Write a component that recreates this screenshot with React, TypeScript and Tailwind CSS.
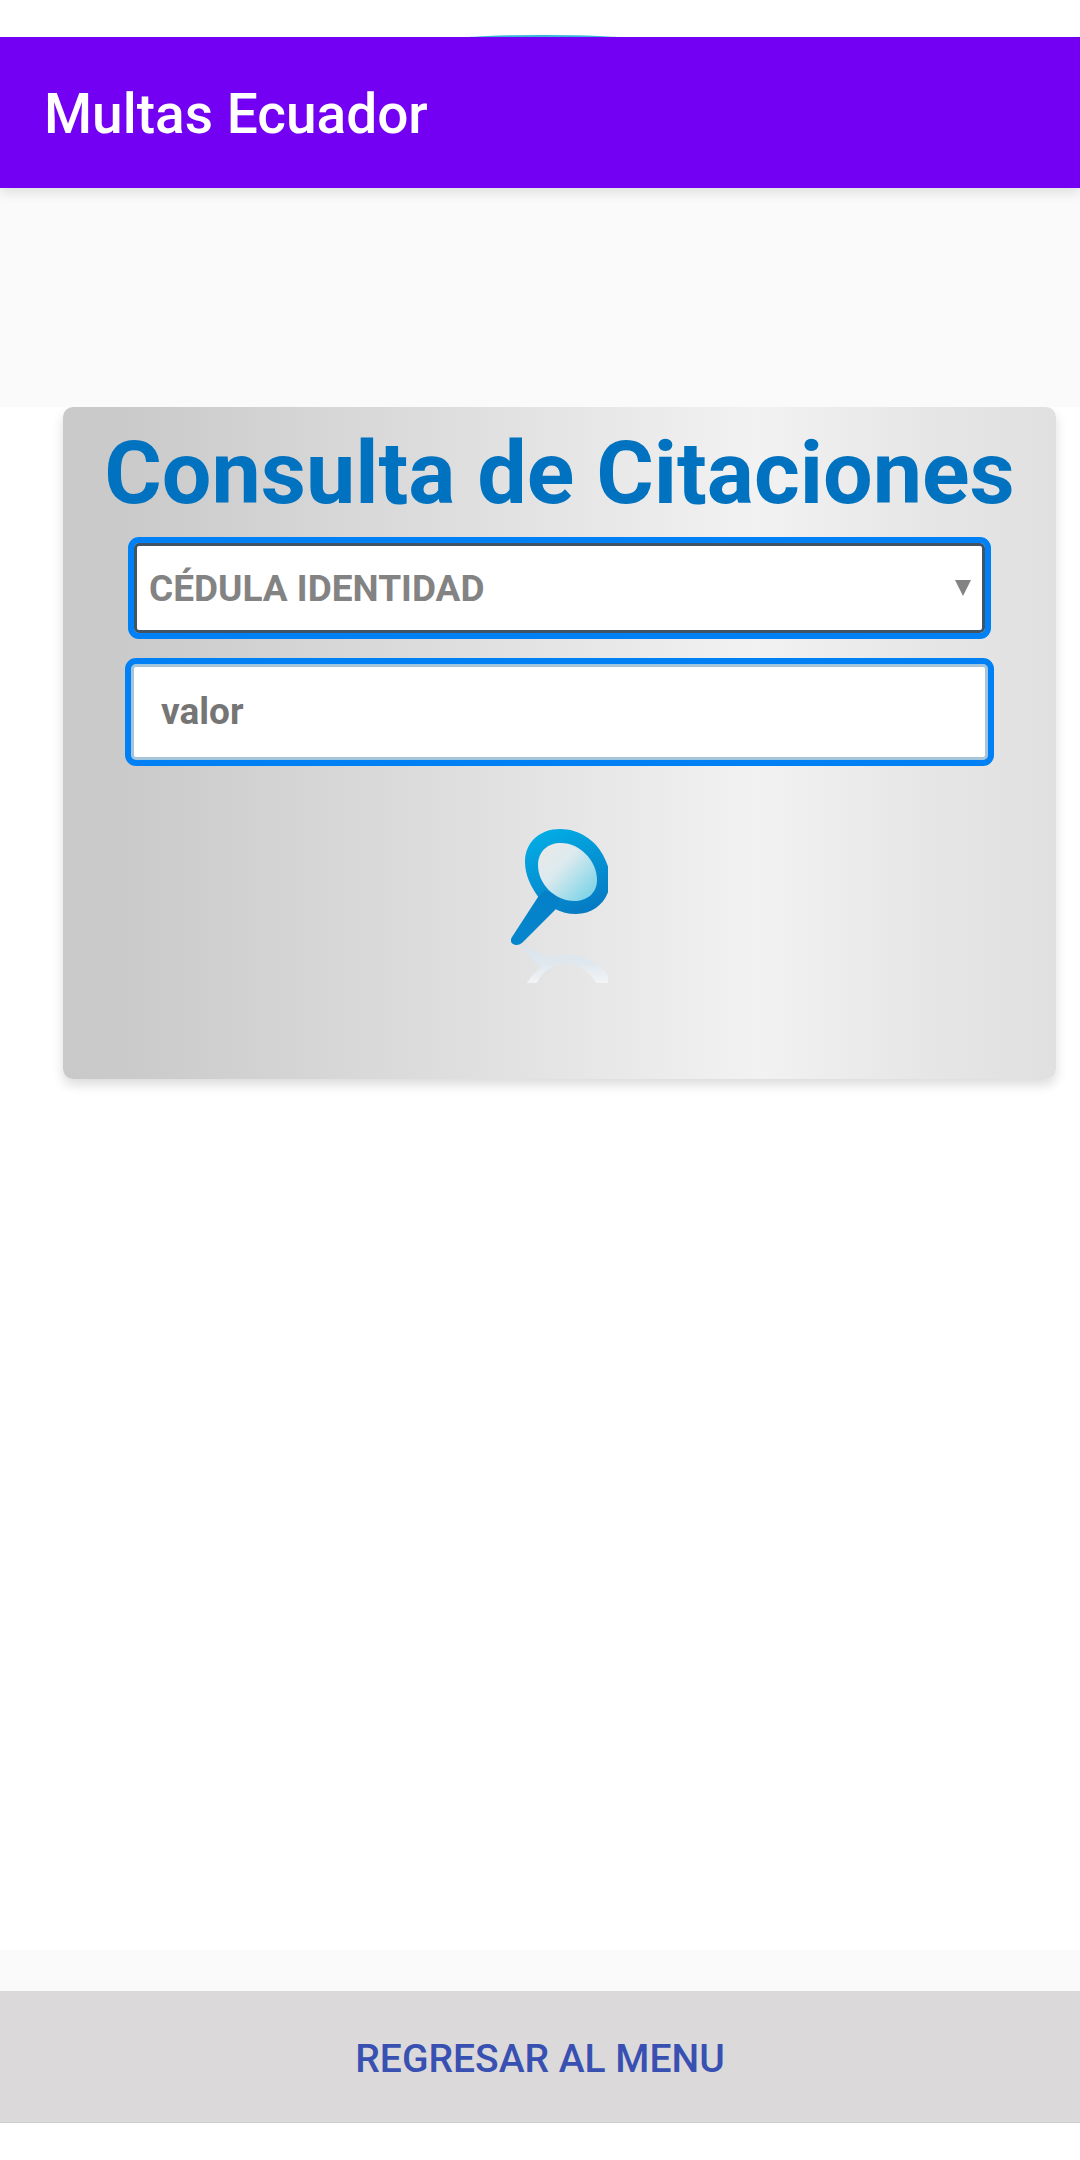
import { useState } from "react";

const SearchIcon = () => (
  <svg width="97" height="155" viewBox="0 0 97 155" fill="none">
    <defs>
      <linearGradient id="rim" x1="30" y1="0" x2="70" y2="90" gradientUnits="userSpaceOnUse">
        <stop offset="0" stopColor="#02aee6" />
        <stop offset="0.5" stopColor="#0593d4" />
        <stop offset="1" stopColor="#0578c2" />
      </linearGradient>
      <linearGradient id="handle" x1="40" y1="66" x2="8" y2="112" gradientUnits="userSpaceOnUse">
        <stop offset="0" stopColor="#0580c8" />
        <stop offset="1" stopColor="#0586cc" />
      </linearGradient>
      <linearGradient id="glass" x1="34" y1="26" x2="76" y2="66" gradientUnits="userSpaceOnUse">
        <stop offset="0" stopColor="#e6e9ea" />
        <stop offset="0.35" stopColor="#dceaee" />
        <stop offset="1" stopColor="#86d6e8" />
      </linearGradient>
      <linearGradient id="mirror" x1="0" y1="116" x2="0" y2="155" gradientUnits="userSpaceOnUse">
        <stop offset="0" stopColor="#dae3ea" />
        <stop offset="0.5" stopColor="#dfe8ef" />
        <stop offset="1" stopColor="#f3f4f5" />
      </linearGradient>
    </defs>
    <path
      d="M6 115C15 116 26 125 40 129C52 126 66 126 77 131C87 136 94 142 98 149V155H85C81 147 74 140 63 137C53 134 44 136 38 141C31 146 28 150 26 155H16C19 149 25 144 30 139C22 133 14 123 6 115Z"
      fill="url(#mirror)"
    />
    <path
      d="M28 70C20 59 14 47 14 34C14 14 29 1 49 1C68 1 84 12 92 27C97 36 100 46 99 57C96 74 83 86 65 86C57 86 50 84 44 81Z"
      fill="url(#rim)"
    />
    <path
      d="M27 69L1 109C-1 112 0 115 2 116C5 118 9 117 12 114L44 82L50 70L34 62Z"
      fill="url(#handle)"
    />
    <path
      d="M27 37C27 23 37 15 50 15C69 15 86 33 86 52C86 65 76 73 63 73C44 73 27 56 27 37Z"
      fill="url(#glass)"
    />
  </svg>
);

export default function App() {
  const [type, setType] = useState("cedula");
  const [value, setValue] = useState("");

  return (
    <div className="flex flex-col min-h-screen bg-white font-['Roboto',sans-serif]">
      <div className="relative z-10 h-[37px] overflow-hidden bg-white">
        <span className="absolute left-[465px] top-[35px] w-[156px] h-[6px] rounded-[50%] bg-[#35b4dc]" />
      </div>
      <header className="relative flex items-center h-[151px] px-[44px] pt-[2px] bg-[#7300f2] shadow-[0_4px_12px_rgba(0,0,0,0.12)]">
        <h1 className="text-[55px] font-medium leading-[64px] text-white">
          Multas Ecuador
        </h1>
      </header>
      <div className="h-[219px] bg-[#fafafa]" />

      <main className="flex-1 overflow-hidden">
        <form
          onSubmit={(e) => e.preventDefault()}
          className="flex flex-col items-center h-[672px] ml-[63px] mr-[24px] pt-[13px] rounded-[10px] bg-[linear-gradient(90deg,#c9c9c9_0%,#cbcbcb_8%,#dcdcdc_36%,#e8e8e8_55%,#f2f2f2_70%,#e6e6e6_87%,#e0e0e0_100%)] shadow-[0_6px_12px_rgba(0,0,0,0.14)]"
        >
          <h2 className="text-[88px] font-bold leading-[106px] text-[#0072bf] whitespace-nowrap">
            Consulta de Citaciones
          </h2>
          <div className="relative self-stretch mx-[71px] mt-[17px]">
            <select
              aria-label="CÉDULA IDENTIDAD"
              value={type}
              onChange={(e) => setType(e.target.value)}
              className="block w-full h-[90px] pl-[12px] pr-[48px] pt-[2px] appearance-none rounded-[5px] border-[3px] border-[#3f5566] outline-[6px] outline-solid outline-[#0080f5] bg-white text-[37px] font-bold text-[#838383]"
            >
              <option value="cedula">CÉDULA IDENTIDAD</option>
            </select>
            <svg
              className="absolute right-[14px] top-[37px] pointer-events-none"
              width="16"
              height="16"
              viewBox="0 0 16 16"
            >
              <path d="M0 0H16L8 16Z" fill="#838383" />
            </svg>
          </div>
          <div className="self-stretch mx-[68px] mt-[31px]">
            <input
              type="text"
              aria-label="valor"
              placeholder="valor"
              value={value}
              onChange={(e) => setValue(e.target.value)}
              className="block w-full h-[96px] px-[27px] pb-[2px] rounded-[5px] border-[3px] border-[#a5c6da] outline-[6px] outline-solid outline-[#0080f5] bg-white text-[37px] font-bold text-[#757575] placeholder:text-[#757575]"
            />
          </div>
          <button type="submit" aria-label="Consulta" className="mt-[68px]">
            <SearchIcon />
          </button>
        </form>
      </main>

      <footer className="pt-[41px] pb-[37px] bg-[linear-gradient(#fafafa_41px,#ffffff_41px)]">
        <button
          type="button"
          className="block w-full h-[132px] pt-[6px] border-b border-[#cccccc] bg-[#dbd9da] text-[39px] font-medium text-[#3850b2]"
        >
          REGRESAR AL MENU
        </button>
      </footer>
    </div>
  );
}
